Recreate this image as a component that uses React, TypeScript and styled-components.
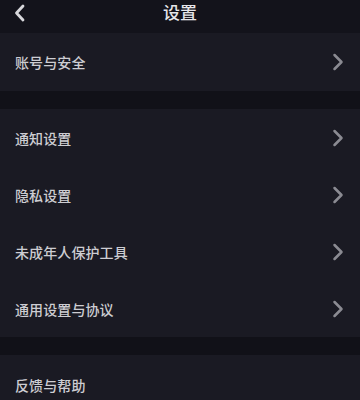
import React from "react";
import styled, { createGlobalStyle } from "styled-components";

const Global = createGlobalStyle`
  html, body { margin: 0; padding: 0; background: #111118; }
  body { font-family: "Noto Sans CJK SC", "Noto Sans", sans-serif; }
`;

const Page = styled.div`
  width: 360px;
  height: 400px;
  overflow: hidden;
  background: #111118;
  display: flex;
  flex-direction: column;
`;

const Header = styled.div`
  height: 33px;
  flex: none;
  background: #13131b;
  display: grid;
  grid-template-columns: 40px 1fr 40px;
  align-items: center;
`;

const BackButton = styled.div`
  display: flex;
  align-items: center;
  padding-left: 13px;
  height: 100%;
  padding-bottom: 7px;
  box-sizing: border-box;
`;

const Title = styled.div`
  text-align: center;
  color: #e6e6ea;
  font-size: 17px;
  font-weight: 500;
  line-height: 1;
  padding-bottom: 10px;
`;

const Section = styled.div<{ $gapTop: number }>`
  margin-top: ${(p) => p.$gapTop}px;
  background: #1a1a23;
  display: flex;
  flex-direction: column;
`;

const Row = styled.div<{ $h: number }>`
  height: ${(p) => p.$h}px;
  display: flex;
  align-items: center;
  justify-content: space-between;
  padding: 0 16px 0 15px;
`;

const Label = styled.span`
  color: #cdcdd2;
  font-size: 14px;
  font-weight: 500;
  letter-spacing: 0.1px;
`;

const Chevron = () => (
  <svg width="12" height="18" viewBox="0 0 12 18">
    <path d="M2.5 2 L9.5 9 L2.5 16" fill="none" stroke="#8b8b92" strokeWidth="2.5" strokeLinecap="round" strokeLinejoin="round" />
  </svg>
);

const Back = () => (
  <svg width="14" height="18" viewBox="0 0 14 18">
    <path d="M10 2 L3.5 9 L10 16" fill="none" stroke="#d8d8dc" strokeWidth="2.8" strokeLinecap="round" strokeLinejoin="round" />
  </svg>
);

const groups = [
  { gap: 0, h: 58, items: ["账号与安全"] },
  { gap: 18, h: 57, items: ["通知设置", "隐私设置", "未成年人保护工具", "通用设置与协议"] },
  { gap: 18, h: 60, items: ["反馈与帮助"], last: true },
];

export default function App() {
  return (
    <Page>
      <Global />
      <Header>
        <BackButton>
          <Back />
        </BackButton>
        <Title>设置</Title>
        <div />
      </Header>
      {groups.map((g, gi) => (
        <Section key={gi} $gapTop={g.gap}>
          {g.items.map((t) => (
            <Row key={t} $h={g.h}>
              <Label>{t}</Label>
              {!g.last && <Chevron />}
            </Row>
          ))}
        </Section>
      ))}
    </Page>
  );
}
